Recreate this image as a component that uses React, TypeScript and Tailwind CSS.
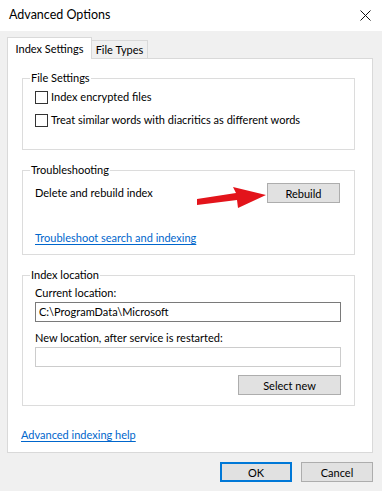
import React from 'react'

const font = { fontFamily: 'Lato, "Noto Sans", "Liberation Sans", sans-serif' }

function Check({ label }: { label: string }) {
  return (
    <label className="flex items-center h-[16px]">
      <span className="w-[13px] h-[13px] border border-[#333333] bg-white mr-[3px]" />
      <span>{label}</span>
    </label>
  )
}

function Btn({ label, className = '' }: { label: string; className?: string }) {
  return (
    <button
      className={`h-[20px] bg-[#e1e1e1] border border-[#adadad] text-black text-[11px] leading-none ${className}`}
    >
      {label}
    </button>
  )
}

export default function App() {
  return (
    <div
      className="relative w-[382px] h-[491px] bg-[#f0f0f0] text-[11px] text-black leading-[16px] flex flex-col overflow-hidden"
      style={font}
    >
      {/* Title bar */}
      <div className="h-[31px] bg-white flex items-center justify-between pl-[9px] pr-[11px]">
        <span className="text-[12.5px] leading-none">Advanced Options</span>
        <svg width="11" height="11" viewBox="0 0 11 11" stroke="#111" strokeWidth="1">
          <path d="M0.5 0.5 L10.5 10.5 M10.5 0.5 L0.5 10.5" />
        </svg>
      </div>

      {/* Tabs */}
      <div className="pl-[7px] pr-[9px] pt-[6px]">
        <div className="flex items-end h-[21px]">
          <div className="w-[85px] h-[22px] bg-white border border-b-0 border-[#d9d9d9] flex items-center justify-center relative z-10 -mb-[1px]">
            Index Settings
          </div>
          <div className="w-[56px] h-[18px] bg-[#f0f0f0] border border-l-0 border-b-0 border-[#d9d9d9] flex items-center justify-center">
            File Types
          </div>
        </div>

        {/* Tab panel */}
        <div className="h-[395px] bg-white border border-[#d9d9d9] pl-[14px] pr-[17px] pt-[11px] flex flex-col">
          <fieldset className="border border-[#dcdcdc] pl-[12px] pb-[22px] h-[80px]">
            <legend className="-ml-[5px] px-[1px]">File Settings</legend>
            <div className="flex flex-col gap-[7px] mt-[3px]">
              <Check label="Index encrypted files" />
              <Check label="Treat similar words with diacritics as different words" />
            </div>
          </fieldset>

          <fieldset className="border border-[#dcdcdc] pl-[12px] pr-[14px] mt-[12px] h-[93px]">
            <legend className="-ml-[5px] px-[1px]">Troubleshooting</legend>
            <div className="flex items-center justify-between mt-[5px]">
              <span>Delete and rebuild index</span>
              <Btn label="Rebuild" className="w-[73px]" />
            </div>
            <a className="block mt-[27px] text-[#0066cc] underline underline-offset-2">
              Troubleshoot search and indexing
            </a>
          </fieldset>

          <fieldset className="border border-[#dcdcdc] pl-[12px] pr-[13px] mt-[12px] h-[139px] flex flex-col">
            <legend className="-ml-[5px] px-[1px]">Index location</legend>
            <div className="mt-[2px]">Current location:</div>
            <div className="h-[20px] mt-[1px] border border-[#7a7a7a] bg-white px-[3px] flex items-center">
              C:\ProgramData\Microsoft
            </div>
            <div className="mt-[8px]">New location, after service is restarted:</div>
            <div className="h-[20px] mt-[1px] border border-[#cccccc] bg-white" />
            <div className="flex justify-end mt-[8px]">
              <Btn label="Select new" className="w-[103px]" />
            </div>
          </fieldset>

          <a className="mt-[21px] -ml-[1px] text-[#0066cc] underline underline-offset-2 self-start">
            Advanced indexing help
          </a>
        </div>

        {/* Dialog buttons */}
        <div className="flex justify-end gap-[9px] mt-[9px]">
          <button className="w-[72px] h-[20px] bg-[#e1e1e1] border-2 border-[#0078d7] leading-none">OK</button>
          <Btn label="Cancel" className="w-[72px]" />
        </div>
      </div>

      {/* Red annotation arrow */}
      <svg className="absolute left-[195px] top-[185px]" width="75" height="25" viewBox="0 0 75 25">
        <polygon points="2,14 41,8 38,2 71,10 43,23 42,15 2,20" fill="#e3141b" />
      </svg>
    </div>
  )
}
